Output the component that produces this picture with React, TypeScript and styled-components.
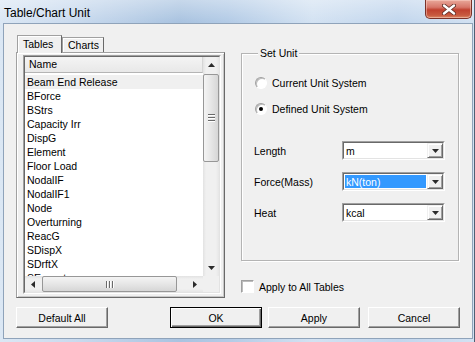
import React, { ReactElement } from 'react';
import styled, { createGlobalStyle } from 'styled-components';

const GlobalStyle = createGlobalStyle`
  html, body {
    margin: 0;
    padding: 0;
    background: #ffffff;
  }
  body {
    font-family: 'Liberation Sans', Arial, sans-serif;
    font-size: 10.5px;
    color: #000000;
  }
`;

const tableNames = [
  'Beam End Release', 'BForce', 'BStrs', 'Capacity Irr', 'DispG', 'Element',
  'Floor Load', 'NodalIF', 'NodalIF1', 'Node', 'Overturning', 'ReacG',
  'SDispX', 'SDrftX', 'SEccent'
];

// window frame
const Window = styled.div`
  width: 475px;
  height: 342px;
  box-sizing: border-box;
  display: flex;
  flex-direction: column;
  overflow: hidden;
  border-right: 1px solid #4f6074;
  background:
    linear-gradient(180deg, rgba(255, 255, 255, 0.35) 0px, rgba(255, 255, 255, 0) 22px),
    linear-gradient(90deg, #dbe7f4 0%, #c9daee 16%, #a9c3e0 38%, #b3cbe6 48%, #d3e2f2 66%, #c2d6ed 84%, #d2e1f2 100%);
`;

const TitleBar = styled.div`
  height: 23px;
  display: flex;
  align-items: flex-start;
  justify-content: space-between;
  flex-shrink: 0;
`;

const Title = styled.div`
  font-size: 12px;
  line-height: 26px;
  padding-left: 4px;
  color: #000000;
`;

const CloseButton = styled.div`
  width: 47px;
  height: 19px;
  margin-right: 2px;
  box-sizing: border-box;
  border: 1px solid #7a3128;
  border-top: none;
  border-radius: 0 0 5px 5px;
  display: flex;
  align-items: center;
  justify-content: center;
  background: linear-gradient(180deg, #e9a89a 0%, #d7776a 40%, #c0412f 55%, #c85a40 85%, #dc8a66 100%);
  box-shadow: inset 0 0 0 1px rgba(255, 220, 210, 0.45);
`;

const Client = styled.div`
  flex: 1;
  min-height: 0;
  margin: 0 1px 3px 3px;
  border: 1px solid #8fa3ba;
  background: #f0f0f0;
  padding: 11px 12px 0 12px;
  display: flex;
  flex-direction: column;
`;

const MainRow = styled.div`
  display: flex;
  gap: 16px;
  height: 263px;
  flex-shrink: 0;
`;

// tab control
const TabControl = styled.div`
  width: 209px;
  display: flex;
  flex-direction: column;
  min-height: 0;
`;

const TabStrip = styled.div`
  height: 17px;
  flex-shrink: 0;
  display: flex;
  align-items: flex-end;
  padding-left: 1px;
`;

const Tab = styled.div<{ $active?: boolean; $width: number }>`
  width: ${({ $width }): number => $width}px;
  height: ${({ $active }): string => ($active ? '18px' : '15px')};
  margin-bottom: ${({ $active }): string => ($active ? '-1px' : '0')};
  box-sizing: border-box;
  position: relative;
  z-index: ${({ $active }): number => ($active ? 1 : 0)};
  border: 1px solid;
  border-bottom: none;
  border-color: #a0a0a0 #696969 transparent #a0a0a0;
  background: #f0f0f0;
  box-shadow: inset 1px 1px #ffffff;
  padding-left: 5px;
  line-height: ${({ $active }): string => ($active ? '16px' : '15px')};
`;

const TabPanel = styled.div`
  flex: 1;
  min-height: 0;
  box-sizing: border-box;
  border: 1px solid;
  border-color: #a0a0a0 #696969 #696969 #a0a0a0;
  box-shadow: inset 1px 1px #ffffff, inset -1px -1px #c8c8c8;
  padding: 2px 3px 3px 6px;
  display: flex;
`;

// list box
const ListOuter = styled.div`
  flex: 1;
  min-height: 0;
  display: flex;
  border: 1px solid;
  border-color: #a0a0a0 #ffffff #ffffff #a0a0a0;
`;

const ListInner = styled.div`
  flex: 1;
  min-height: 0;
  border: 1px solid;
  border-color: #696969 #e3e3e3 #e3e3e3 #696969;
  background: #ffffff;
  display: grid;
  grid-template-columns: minmax(0, 1fr) 16px;
  grid-template-rows: minmax(0, 1fr) 16px;
  overflow: hidden;
`;

const ListContent = styled.div`
  overflow: hidden;
  min-height: 0;
  display: flex;
  flex-direction: column;
`;

const HeaderCell = styled.div`
  height: 16px;
  flex-shrink: 0;
  box-sizing: border-box;
  border-bottom: 1px solid #b5b5b5;
  border-right: 1px solid #d5d5d5;
  background: linear-gradient(180deg, #f4f4f4, #e8e8e8);
  padding-left: 4px;
  line-height: 15px;
`;

const Rows = styled.div`
  padding-top: 2px;
`;

const Row = styled.div<{ $selected?: boolean }>`
  height: 14px;
  line-height: 14px;
  padding-left: 2px;
  white-space: nowrap;
  background: ${({ $selected }): string => ($selected ? '#f0f0f0' : 'transparent')};
`;

// scroll bars
const VScroll = styled.div`
  display: flex;
  flex-direction: column;
  min-height: 0;
  background: linear-gradient(90deg, #e2e2e2 0px, #f0f0f0 3px, #f0f0f0 13px, #e6e6e6 16px);
`;

const HScroll = styled.div`
  display: flex;
  background: linear-gradient(180deg, #e2e2e2 0px, #f0f0f0 3px, #f0f0f0 13px, #e6e6e6 16px);
`;

const ArrowCell = styled.div`
  width: 16px;
  height: 16px;
  flex-shrink: 0;
  display: flex;
  align-items: center;
  justify-content: center;
`;

const VThumb = styled.div`
  height: 88px;
  flex-shrink: 0;
  margin-top: 1px;
  box-sizing: border-box;
  border: 1px solid #979797;
  border-radius: 2px;
  background: linear-gradient(90deg, #f4f4f4 0%, #e6e6e6 50%, #d6d6d6 100%);
  display: flex;
  flex-direction: column;
  align-items: center;
  justify-content: center;
  gap: 1px;
`;

const HThumb = styled.div`
  width: 135px;
  flex-shrink: 0;
  margin-left: 1px;
  box-sizing: border-box;
  border: 1px solid #979797;
  border-radius: 2px;
  background: linear-gradient(180deg, #f4f4f4 0%, #e6e6e6 50%, #d6d6d6 100%);
  display: flex;
  align-items: center;
  justify-content: center;
  gap: 1px;
`;

const GripLine = styled.span<{ $vertical?: boolean }>`
  display: block;
  width: ${({ $vertical }): string => ($vertical ? '1px' : '7px')};
  height: ${({ $vertical }): string => ($vertical ? '7px' : '1px')};
  background: #6a6a6a;
  box-shadow: ${({ $vertical }): string => ($vertical ? '1px 0 #ffffff' : '0 1px #ffffff')};
  margin: ${({ $vertical }): string => ($vertical ? '0 1px 0 0' : '0 0 1px 0')};
`;

const Spacer = styled.div`
  flex: 1;
  min-height: 0;
`;

const Corner = styled.div`
  background: #f0f0f0;
`;

// right side
const RightColumn = styled.div`
  width: 218px;
  padding-top: 12px;
  display: flex;
  flex-direction: column;
`;

const GroupBox = styled.fieldset`
  margin: 0;
  height: 214px;
  box-sizing: border-box;
  padding: 0 12px;
  border: 1px solid #b4b4b4;
  box-shadow: inset 1px 1px #ffffff, 1px 1px #ffffff;
  min-width: 0;
`;

const Legend = styled.legend`
  margin-left: 4px;
  padding: 0 2px;
  line-height: 13px;
  background: #f0f0f0;
`;

const RadioList = styled.div`
  padding-top: 16px;
  display: flex;
  flex-direction: column;
  gap: 13px;
`;

const RadioRow = styled.label`
  height: 13px;
  display: flex;
  align-items: center;
  gap: 5px;
  padding-left: 1px;
`;

const RadioCircle = styled.span<{ $checked?: boolean }>`
  width: 12px;
  height: 12px;
  box-sizing: border-box;
  border-radius: 50%;
  border: 1px solid;
  border-color: #a0a0a0 #ffffff #ffffff #a0a0a0;
  background: #ffffff;
  display: flex;
  align-items: center;
  justify-content: center;
  box-shadow: inset 1px 1px #bdbdbd;

  &::after {
    content: '';
    width: 4px;
    height: 4px;
    border-radius: 50%;
    background: ${({ $checked }): string => ($checked ? '#000000' : 'transparent')};
  }
`;

const UnitGrid = styled.div`
  margin-top: 26px;
  display: grid;
  grid-template-columns: 88px 103px;
  row-gap: 12px;
  align-items: center;
`;

const UnitLabel = styled.span`
  padding-left: 0;
`;

const Combo = styled.div`
  height: 19px;
  box-sizing: border-box;
  display: flex;
  border: 1px solid;
  border-color: #a0a0a0 #ffffff #ffffff #a0a0a0;
`;

const ComboInner = styled.div`
  flex: 1;
  display: flex;
  border: 1px solid;
  border-color: #696969 #e3e3e3 #e3e3e3 #696969;
  background: #ffffff;
`;

const ComboValue = styled.div<{ $selected?: boolean }>`
  flex: 1;
  margin: 1px;
  padding-left: 1px;
  display: flex;
  align-items: center;
  color: ${({ $selected }): string => ($selected ? '#ffffff' : '#000000')};
  background: ${({ $selected }): string => ($selected ? '#3399ff' : 'transparent')};
`;

const DropButton = styled.div`
  width: 16px;
  box-sizing: border-box;
  border: 1px solid;
  border-color: #f0f0f0 #696969 #696969 #f0f0f0;
  box-shadow: inset 1px 1px #ffffff, inset -1px -1px #a0a0a0;
  background: #f0f0f0;
  display: flex;
  align-items: center;
  justify-content: center;
`;

const CheckRow = styled.label`
  margin-top: 19px;
  height: 13px;
  display: flex;
  align-items: center;
  gap: 5px;
`;

const CheckBox = styled.span`
  width: 13px;
  height: 13px;
  box-sizing: border-box;
  border: 1px solid;
  border-color: #a0a0a0 #ffffff #ffffff #a0a0a0;
  background: #ffffff;
  box-shadow: inset 1px 1px #bdbdbd;
`;

// bottom buttons
const ButtonRow = styled.div`
  margin-top: 9px;
  display: flex;
`;

const PushButton = styled.div<{ $default?: boolean; $gap?: number }>`
  width: 92px;
  height: 21px;
  box-sizing: border-box;
  margin-left: ${({ $gap }): number => $gap ?? 0}px;
  border: 1px solid;
  border-color: ${({ $default }): string => ($default ? '#000000' : '#ffffff #696969 #696969 #ffffff')};
  box-shadow: ${({ $default }): string => ($default
    ? 'inset 1px 1px #ffffff, inset -1px -1px #696969, inset -2px -2px #a0a0a0'
    : 'inset -1px -1px #a0a0a0')};
  background: #f0f0f0;
  display: flex;
  align-items: center;
  justify-content: center;
`;

const Arrow = ({ dir }: { dir: 'up' | 'down' | 'left' | 'right' }): ReactElement => {
  const points = {
    up: '0,4 7,4 3.5,0',
    down: '0,0 7,0 3.5,4',
    left: '4,0 4,7 0,3.5',
    right: '0,0 0,7 4,3.5'
  }[dir];
  const horizontal = dir === 'up' || dir === 'down';
  return (
    <svg width={ horizontal ? 7 : 4 } height={ horizontal ? 4 : 7 }>
      <polygon points={ points } fill='#2b2b2b' />
    </svg>
  );
};

const App = (): ReactElement => (
  <>
    <GlobalStyle />
    <Window>
      <TitleBar>
        <Title>Table/Chart Unit</Title>
        <CloseButton>
          <svg width='14' height='11' viewBox='0 0 14 11'>
            <path d='M2 1.5 L12 9.5 M12 1.5 L2 9.5' stroke='#5a2a22' strokeWidth='4' strokeLinecap='round' />
            <path d='M2 1.5 L12 9.5 M12 1.5 L2 9.5' stroke='#ffffff' strokeWidth='2.4' strokeLinecap='round' />
          </svg>
        </CloseButton>
      </TitleBar>

      <Client>
        <MainRow>
          <TabControl>
            <TabStrip>
              <Tab $active $width={ 45 }>Tables</Tab>
              <Tab $width={ 42 }>Charts</Tab>
            </TabStrip>
            <TabPanel>
              <ListOuter>
                <ListInner>
                  <ListContent>
                    <HeaderCell>Name</HeaderCell>
                    <Rows>
                      { tableNames.map((name, i) => (
                        <Row key={ name } $selected={ i === 0 }>{ name }</Row>
                      )) }
                    </Rows>
                  </ListContent>
                  <VScroll>
                    <ArrowCell><Arrow dir='up' /></ArrowCell>
                    <VThumb>
                      <GripLine />
                      <GripLine />
                      <GripLine />
                    </VThumb>
                    <Spacer />
                    <ArrowCell><Arrow dir='down' /></ArrowCell>
                  </VScroll>
                  <HScroll>
                    <ArrowCell><Arrow dir='left' /></ArrowCell>
                    <HThumb>
                      <GripLine $vertical />
                      <GripLine $vertical />
                      <GripLine $vertical />
                    </HThumb>
                    <Spacer />
                    <ArrowCell><Arrow dir='right' /></ArrowCell>
                  </HScroll>
                  <Corner />
                </ListInner>
              </ListOuter>
            </TabPanel>
          </TabControl>

          <RightColumn>
            <GroupBox>
              <Legend>Set Unit</Legend>
              <RadioList>
                <RadioRow><RadioCircle />Current Unit System</RadioRow>
                <RadioRow><RadioCircle $checked />Defined Unit System</RadioRow>
              </RadioList>
              <UnitGrid>
                <UnitLabel>Length</UnitLabel>
                <Combo>
                  <ComboInner>
                    <ComboValue>m</ComboValue>
                    <DropButton><Arrow dir='down' /></DropButton>
                  </ComboInner>
                </Combo>
                <UnitLabel>Force(Mass)</UnitLabel>
                <Combo>
                  <ComboInner>
                    <ComboValue $selected>kN(ton)</ComboValue>
                    <DropButton><Arrow dir='down' /></DropButton>
                  </ComboInner>
                </Combo>
                <UnitLabel>Heat</UnitLabel>
                <Combo>
                  <ComboInner>
                    <ComboValue>kcal</ComboValue>
                    <DropButton><Arrow dir='down' /></DropButton>
                  </ComboInner>
                </Combo>
              </UnitGrid>
            </GroupBox>
            <CheckRow><CheckBox />Apply to All Tables</CheckRow>
          </RightColumn>
        </MainRow>

        <ButtonRow>
          <PushButton>Default All</PushButton>
          <PushButton $default $gap={ 62 }>OK</PushButton>
          <PushButton $gap={ 6 }>Apply</PushButton>
          <PushButton $gap={ 8 }>Cancel</PushButton>
        </ButtonRow>
      </Client>
    </Window>
  </>
);

export default App;
